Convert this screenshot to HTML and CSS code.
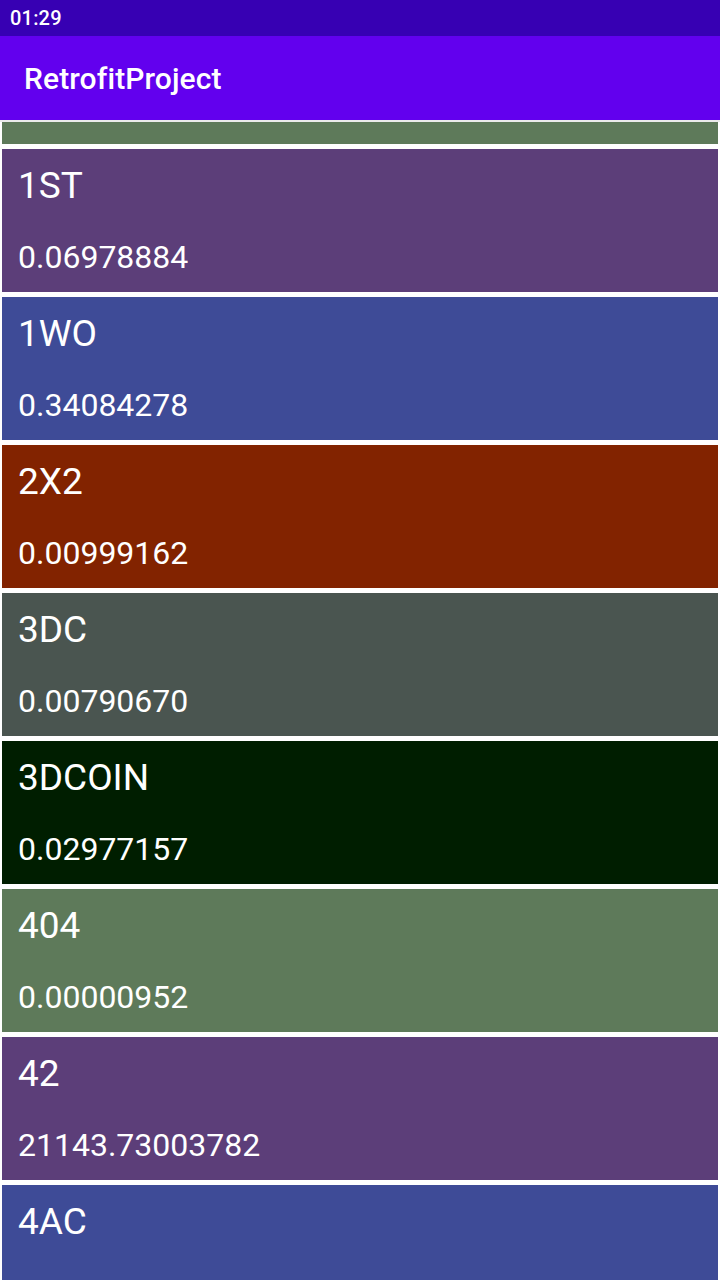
FILE: index.html
```html
<!DOCTYPE html>
<html>
<head>
<meta charset="utf-8">
<link rel="stylesheet" href="styles.css">
</head>
<body>
<div class="screen">
  <div class="status-bar"><span class="time">01:29</span></div>
  <header class="app-bar"><h1 class="title">RetrofitProject</h1></header>
  <main class="list">
    <div class="list-inner">
      <div class="coin coin-green coin-partial"><div class="coin-name">&nbsp;</div><div class="coin-price">&nbsp;</div></div>
      <div class="coin coin-purple"><div class="coin-name">1ST</div><div class="coin-price">0.06978884</div></div>
      <div class="coin coin-blue"><div class="coin-name">1WO</div><div class="coin-price">0.34084278</div></div>
      <div class="coin coin-red"><div class="coin-name">2X2</div><div class="coin-price">0.00999162</div></div>
      <div class="coin coin-gray"><div class="coin-name">3DC</div><div class="coin-price">0.00790670</div></div>
      <div class="coin coin-dark"><div class="coin-name">3DCOIN</div><div class="coin-price">0.02977157</div></div>
      <div class="coin coin-green"><div class="coin-name">404</div><div class="coin-price">0.00000952</div></div>
      <div class="coin coin-purple"><div class="coin-name">42</div><div class="coin-price">21143.73003782</div></div>
      <div class="coin coin-blue"><div class="coin-name">4AC</div></div>
    </div>
  </main>
</div>
</body>
</html>
```

FILE: styles.css
```css
* { box-sizing: border-box; }
html, body {
  margin: 0;
  padding: 0;
  width: 720px;
  height: 1280px;
  overflow: hidden;
  background: #ffffff;
  font-family: Roboto, "Noto Sans", sans-serif;
}
.screen {
  width: 720px;
  height: 1280px;
  display: flex;
  flex-direction: column;
}
.status-bar {
  height: 36px;
  background: #3700b3;
  color: #ffffff;
  display: flex;
  align-items: center;
  padding-left: 10px;
  flex-shrink: 0;
}
.time {
  font-size: 20px;
  font-weight: 500;
  letter-spacing: 0.2px;
}
.app-bar {
  height: 84px;
  background: #6200ee;
  display: flex;
  align-items: center;
  padding-left: 24px;
  flex-shrink: 0;
}
.title {
  margin: 0;
  color: #ffffff;
  font-size: 30px;
  font-weight: 500;
  letter-spacing: 0.1px;
}
.list {
  flex: 1;
  overflow: hidden;
  padding: 0 2px;
  border-top: 2px solid #ebebeb;
}
.list-inner {
  display: flex;
  flex-direction: column;
  gap: 5px;
}
.coin {
  height: 143px;
  flex-shrink: 0;
  padding: 16px 16px 0 16px;
  color: #ffffff;
}
.coin-partial {
  margin-top: -121px;
}
.coin-name {
  font-size: 37px;
  line-height: 42px;
}
.coin-price {
  font-size: 32px;
  line-height: 38px;
  margin-top: 31px;
}
.coin-green { background: #5e7a5a; }
.coin-purple { background: #5c3e79; }
.coin-blue { background: #3e4b97; }
.coin-red { background: #822300; }
.coin-gray { background: #4a5550; }
.coin-dark { background: #001e00; }
```
